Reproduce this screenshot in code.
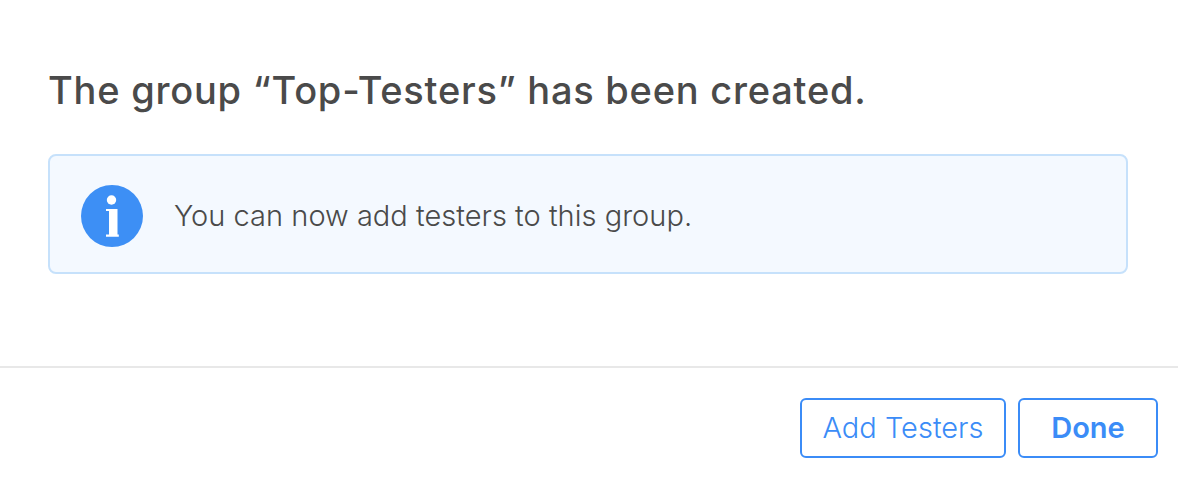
<script>
</script>

<div class="dialog">
  <div class="body">
    <h1>The group “Top-Testers” has been created.</h1>
    <div class="notice">
      <svg class="icon" width="62" height="62" viewBox="0 0 62 62" aria-hidden="true">
        <circle cx="31" cy="31" r="31" fill="#3d8ff5" />
        <circle cx="30.5" cy="15" r="4.7" fill="#fff" />
        <path d="M25 24h11.5v25.6h1.3v2.1H25v-2.1h3V26.1h-3z" fill="#fff" />
      </svg>
      <p>You can now add testers to this group.</p>
    </div>
  </div>
  <div class="footer">
    <button class="btn">Add Testers</button>
    <button class="btn primary">Done</button>
  </div>
</div>

<style>
  :global(body) {
    margin: 0;
    background: #fff;
  }
  .dialog {
    width: 1178px;
    height: 478px;
    display: flex;
    flex-direction: column;
    font-family: Inter, "Liberation Sans", sans-serif;
    overflow: hidden;
  }
  .body {
    height: 368px;
    box-sizing: border-box;
    padding: 69px 50px 0 48px;
    border-bottom: 2px solid #e8e8e8;
  }
  h1 {
    margin: 0;
    font-size: 38px;
    line-height: 43px;
    font-weight: 450;
    letter-spacing: 0.77px;
    color: #4a4a4a;
  }
  .notice {
    margin-top: 42px;
    height: 120px;
    box-sizing: border-box;
    display: flex;
    align-items: center;
    gap: 31px;
    padding: 2px 0 0 31px;
    background: #f4f9ff;
    border: 2px solid #c6e1fb;
    border-radius: 8px;
  }
  .icon {
    flex: none;
    margin-top: 2px;
  }
  p {
    margin: 0;
    font-size: 29px;
    font-weight: 300;
    letter-spacing: 0.02px;
    color: #4a4a4a;
  }
  .footer {
    display: flex;
    justify-content: flex-end;
    gap: 12px;
    padding: 30px 20px 0 0;
  }
  .btn {
    height: 60px;
    box-sizing: border-box;
    padding: 0 20.5px 2px;
    background: #fff;
    border: 2px solid #3b8cf7;
    border-radius: 6px;
    color: #3b8cf7;
    font: 300 29px Inter, "Liberation Sans", sans-serif;
  }
  .primary {
    width: 140px;
    padding: 0 0 2px;
    font-weight: 600;
  }
</style>
